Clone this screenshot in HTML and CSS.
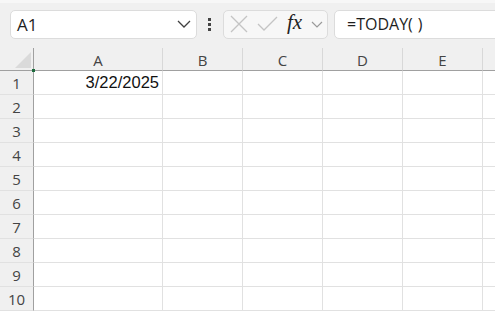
FILE: index.html
```html
<!DOCTYPE html>
<html lang="en">
<head>
  <meta charset="UTF-8">
  <title>Sheet</title>
  <link rel="stylesheet" href="styles.css">
</head>
<body>
  <!-- formula bar -->
  <div class="toolbar">
    <div class="name-box">
      <span class="name-text">A1</span>
      <svg class="chev" width="14" height="8" viewBox="0 0 14 8"><path d="M1 1 L7 7 L13 1" fill="none" stroke="#404040" stroke-width="1.3"/></svg>
    </div>
    <div class="dots"><i></i><i></i><i></i></div>
    <div class="fx-box">
      <svg width="18" height="18" viewBox="0 0 18 18"><path d="M1 1 L17 17 M17 1 L1 17" stroke="#c4c4c4" stroke-width="1.3" fill="none"/></svg>
      <svg width="21" height="16" viewBox="0 0 21 16"><path d="M1 8 L7 14 L20 1" stroke="#c4c4c4" stroke-width="1.3" fill="none"/></svg>
      <span class="fx">fx</span>
      <svg width="12" height="7" viewBox="0 0 12 7"><path d="M1 1 L6 6 L11 1" fill="none" stroke="#9a9a9a" stroke-width="1.2"/></svg>
    </div>
    <div class="formula">=TODAY(<span class="paren">)</span></div>
  </div>

  <!-- grid -->
  <div class="sheet">
    <div class="hd corner">
      <svg class="tri" width="16" height="16" viewBox="0 0 16 16"><path d="M16 0 L16 16 L0 16 Z" fill="#dadada"/></svg>
    </div>
    <div class="hd col">A</div>
    <div class="hd col">B</div>
    <div class="hd col">C</div>
    <div class="hd col">D</div>
    <div class="hd col">E</div>
    <div class="hd col"></div>

    <div class="hd row">1</div><div class="cell num">3/22/2025</div><div class="cell"></div><div class="cell"></div><div class="cell"></div><div class="cell"></div><div class="cell"></div>
    <div class="hd row">2</div><div class="cell"></div><div class="cell"></div><div class="cell"></div><div class="cell"></div><div class="cell"></div><div class="cell"></div>
    <div class="hd row">3</div><div class="cell"></div><div class="cell"></div><div class="cell"></div><div class="cell"></div><div class="cell"></div><div class="cell"></div>
    <div class="hd row">4</div><div class="cell"></div><div class="cell"></div><div class="cell"></div><div class="cell"></div><div class="cell"></div><div class="cell"></div>
    <div class="hd row">5</div><div class="cell"></div><div class="cell"></div><div class="cell"></div><div class="cell"></div><div class="cell"></div><div class="cell"></div>
    <div class="hd row">6</div><div class="cell"></div><div class="cell"></div><div class="cell"></div><div class="cell"></div><div class="cell"></div><div class="cell"></div>
    <div class="hd row">7</div><div class="cell"></div><div class="cell"></div><div class="cell"></div><div class="cell"></div><div class="cell"></div><div class="cell"></div>
    <div class="hd row">8</div><div class="cell"></div><div class="cell"></div><div class="cell"></div><div class="cell"></div><div class="cell"></div><div class="cell"></div>
    <div class="hd row">9</div><div class="cell"></div><div class="cell"></div><div class="cell"></div><div class="cell"></div><div class="cell"></div><div class="cell"></div>
    <div class="hd row">10</div><div class="cell"></div><div class="cell"></div><div class="cell"></div><div class="cell"></div><div class="cell"></div><div class="cell"></div>
  </div>
</body>
</html>
```

FILE: styles.css
```css
/* page */
body {
  margin: 0;
  background-color: #f0f0f0;
  font-family: "Open Sans", "Noto Sans", sans-serif;
  color: #222;
  overflow: hidden;
  width: 495px;
  height: 311px;
}
/* formula bar */
.toolbar {
  display: flex;
  align-items: center;
  height: 48px;
  padding-left: 10px;
  box-sizing: border-box;
  border-top: 3px solid #f7f7f7;
  overflow: hidden;
}
.name-box, .fx-box, .formula {
  height: 29px;
  box-sizing: border-box;
  background-color: #fff;
  border: 1px solid #dcdcdc;
  border-radius: 5px;
  display: flex;
  align-items: center;
}
.name-box {
  width: 187px;
  flex: none;
  padding: 0 5px 0 6px;
  justify-content: space-between;
  margin-top: -3px;
}
.name-text {
  font-size: 17px;
  color: #1e1e1e;
}
.dots {
  width: 3px;
  flex: none;
  margin: -3px 12px 0 11px;
  display: flex;
  flex-direction: column;
  gap: 2px;
}
.dots i {
  display: block;
  width: 3px;
  height: 3px;
  background-color: #444;
}
.fx-box {
  width: 105px;
  flex: none;
  padding: 0 4px 0 6px;
  justify-content: space-between;
  margin-top: -3px;
  background-color: #f7f7f7;
}
.fx {
  font-family: "Liberation Serif", serif;
  font-style: italic;
  font-size: 21px;
  color: #222;
  margin-top: -3px;
}
.formula {
  flex: none;
  width: 170px;
  margin: -3px 0 0 6px;
  padding-left: 12px;
  font-size: 16px;
  color: #1e1e1e;
}
.paren {
  margin-left: 5px;
}
/* grid */
.sheet {
  display: grid;
  grid-template-columns: 34px 129px 80px 80px 80px 80px 80px;
  grid-template-rows: 23px repeat(10, 24px);
  background-color: #fff;
  width: 495px;
  overflow: hidden;
}
.hd {
  background-color: #f0f0f0;
  color: #444;
  font-size: 15px;
  display: flex;
  align-items: center;
  justify-content: center;
  box-sizing: border-box;
}
.hd.col {
  border-right: 1px solid #d8d8d8;
  border-bottom: 1px solid #a0a0a0;
  padding-top: 1px;
}
.hd.row {
  border-right: 1px solid #a0a0a0;
  border-bottom: 1px solid #e1e1e1;
  font-size: 15px;
}
.corner {
  border-right: 1px solid #a0a0a0;
  border-bottom: 1px solid #a0a0a0;
  justify-content: flex-end;
  align-items: flex-end;
  padding: 0 2px 2px 0;
  position: relative;
}
.corner::after {
  content: "";
  position: absolute;
  right: -2px;
  bottom: -2px;
  width: 3px;
  height: 3px;
  background-color: #1e6b3e;
}
.tri {
  display: block;
}
.cell {
  border-right: 1px solid #e1e1e1;
  border-bottom: 1px solid #e1e1e1;
  box-sizing: border-box;
  font-family: "Liberation Sans", sans-serif;
  font-size: 16.5px;
  color: #111;
  display: flex;
  align-items: center;
}
.num {
  justify-content: flex-end;
  padding-right: 3px;
}
```
